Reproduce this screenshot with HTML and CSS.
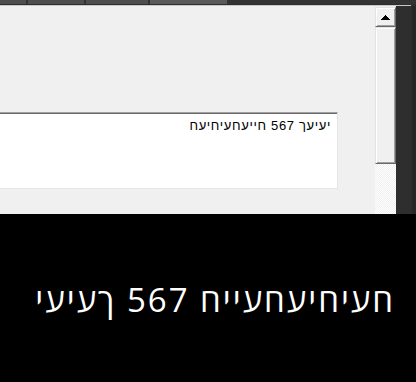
FILE: index.html
```html
<!DOCTYPE html>
<html lang="he">

<head>
    <meta charset="utf-8">
    <meta name="viewport" content="width=device-width, initial-scale=1.0">
    <title>Tekst</title>

    <link rel="stylesheet" href="styles.css">

</head>

<body>

    <header class="top">
        <nav class="faner">
            <span class="fane" style="width: 26px"></span>
            <span class="fane" style="width: 56px"></span>
            <span class="fane" style="width: 62px"></span>
            <span class="fane valgt" style="width: 77px"></span>
        </nav>
        <div class="kant"></div>
    </header>

    <main class="vindue">
        <div class="panel">
            <div class="indhold">
                <div class="felt">יעיעך 567 חייעחעיחיעח</div>
            </div>
            <div class="scroll">
                <div class="knap">
                    <svg width="9" height="5" viewBox="0 0 9 5">
                        <polygon points="0,5 9,5 4.5,0" fill="#000" />
                    </svg>
                </div>
                <div class="greb"></div>
                <div class="spor"></div>
            </div>
        </div>
        <div class="side"></div>
    </main>

    <footer class="bund">
        <p class="stor">יעיעך 567 חייעחעיחיעח</p>
    </footer>

</body>

</html>
```

FILE: styles.css
```css
body {
    margin: 0;
    background: #000;
}

.top {
    background: #2e2e2e;
}

.faner {
    display: flex;
    gap: 2px;
    height: 4px;
    background: #333;
}

.fane {
    background: #4e4e4e;
}

.valgt {
    background: #5a5a5a;
}

.kant {
    height: 1px;
    margin-top: 1px;
    margin-right: 5px;
    background: #c8c8c8;
}

.vindue {
    display: flex;
    height: 208px;
}

.panel {
    display: flex;
    width: 396px;
    background: #f0f0f0;
}

.side {
    flex: 1;
    background: #2e2e2e;
    border-right: 4px solid #262626;
}

.indhold {
    width: 375px;
    padding-top: 106px;
}

.felt {
    box-sizing: border-box;
    width: 338px;
    height: 77px;
    padding: 5px 6px 0 0;
    background: #fff;
    border-top: 1px solid #a0a0a0;
    border-right: 1px solid #e6e6e6;
    border-bottom: 1px solid #e6e6e6;
    box-shadow: inset 0 1px #696969;
    font-family: "Liberation Sans", "DejaVu Sans", sans-serif;
    font-size: 13px;
    letter-spacing: 0.65px;
    line-height: 15px;
    color: #000;
    text-align: right;
    direction: ltr;
}

.scroll {
    display: flex;
    flex-direction: column;
    width: 21px;
    padding-top: 1px;
}

.knap,
.greb {
    box-sizing: border-box;
    background: #f0f0f0;
    border: 1px solid;
    border-color: #e3e3e3 #696969 #696969 #e3e3e3;
    box-shadow: inset 1px 1px #fff, inset -1px -1px #a0a0a0;
}

.knap {
    height: 20px;
    display: flex;
    align-items: center;
    justify-content: center;
}

.knap svg {
    display: block;
    shape-rendering: crispEdges;
}

.greb {
    height: 137px;
}

.spor {
    flex: 1;
    background: repeating-conic-gradient(#fff 0 25%, #f0f0f0 0 50%) 0 0 / 2px 2px;
}

.bund {
    height: 168px;
    overflow: hidden;
}

.stor {
    margin: 0;
    padding: 71px 21px 0 0;
    font-family: "Open Sans", "DejaVu Sans", sans-serif;
    font-size: 33px;
    letter-spacing: 2px;
    line-height: 30px;
    color: #fff;
    text-align: right;
    direction: ltr;
    unicode-bidi: bidi-override;
}
```
